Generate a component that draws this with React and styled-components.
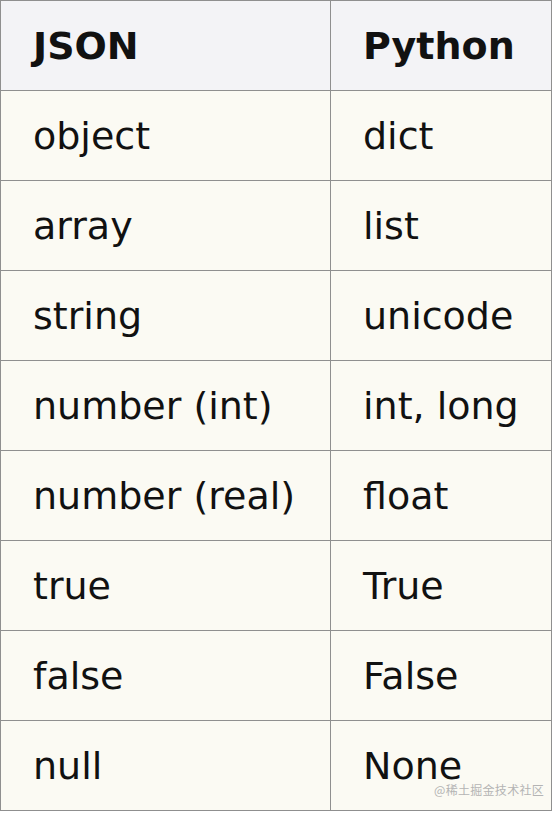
import React from 'react';
import styled, { createGlobalStyle } from 'styled-components';

const GlobalStyle = createGlobalStyle`
  html, body {
    margin: 0;
    padding: 0;
    background: #ffffff;
  }
`;

const Page = styled.div`
  position: relative;
  width: 558px;
  height: 814px;
  overflow: hidden;
`;

const Table = styled.table`
  border-collapse: collapse;
  width: 551px;
  table-layout: fixed;
  font-family: "DejaVu Sans", Verdana, sans-serif;
  font-size: 38px;
  color: #111111;
`;

const Col = styled.col`
  width: ${(p) => p.w}px;
`;

const Cell = styled.td`
  height: 90px;
  padding: 0 0 0 32px;
  border: 1px solid #8f8f8f;
  background: #fbfaf3;
  font-weight: 400;
  text-align: left;
  vertical-align: middle;
  white-space: nowrap;
  box-sizing: border-box;
`;

const HeadCell = styled(Cell).attrs({ as: 'th' })`
  background: #f3f3f6;
  font-weight: 700;
`;

const Watermark = styled.span`
  position: absolute;
  left: 434px;
  top: 781px;
  font-family: "Noto Sans CJK SC", sans-serif;
  font-size: 12px;
  color: #b4b4b4;
  letter-spacing: 0.3px;
`;

const rows = [
  ['object', 'dict'],
  ['array', 'list'],
  ['string', 'unicode'],
  ['number (int)', 'int, long'],
  ['number (real)', 'float'],
  ['true', 'True'],
  ['false', 'False'],
  ['null', 'None'],
];

const App = () => (
  <Page>
    <GlobalStyle />
    <Table>
      <colgroup>
        <Col w={330} />
        <Col w={221} />
      </colgroup>
      <thead>
        <tr>
          <HeadCell>JSON</HeadCell>
          <HeadCell>Python</HeadCell>
        </tr>
      </thead>
      <tbody>
        {rows.map(([json, py]) => (
          <tr key={json}>
            <Cell>{json}</Cell>
            <Cell>{py}</Cell>
          </tr>
        ))}
      </tbody>
    </Table>
    <Watermark>@稀土掘金技术社区</Watermark>
  </Page>
);

export default App;
